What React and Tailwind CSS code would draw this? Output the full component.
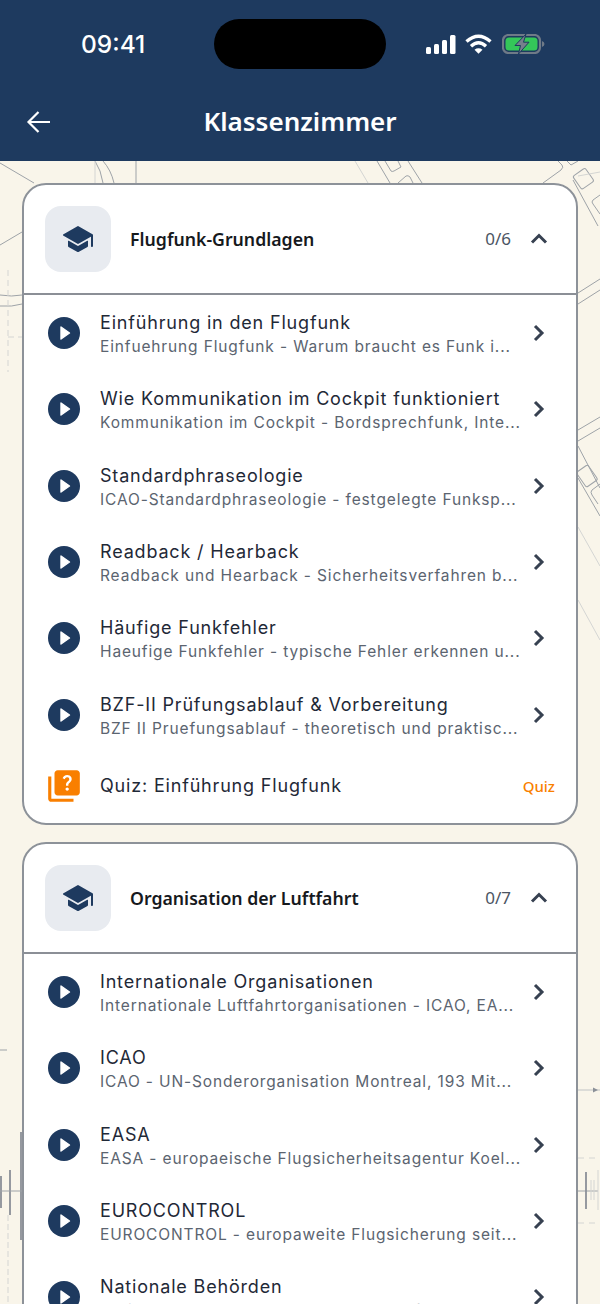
import React from "react";
import { IoSchool } from "react-icons/io5";
import { MdQuiz } from "react-icons/md";

const Play = () => (
  <svg width="32" height="32" viewBox="0 0 32 32" className="shrink-0">
    <circle cx="16" cy="16" r="16" fill="#1e3a5f" />
    <path d="M13 10 L21.5 16 L13 22 Z" fill="#fff" stroke="#fff" strokeWidth="1.4" strokeLinejoin="round" />
  </svg>
);

const ChevronRight = () => (
  <svg width="24" height="24" viewBox="0 0 24 24" className="shrink-0" fill="none" stroke="#374151" strokeWidth="3">
    <path d="M8 5 L15 12 L8 19" />
  </svg>
);

const ChevronUp = () => (
  <svg width="24" height="24" viewBox="0 0 24 24" className="shrink-0" fill="none" stroke="#374151" strokeWidth="3">
    <path d="M5 15.5 L12 8.5 L19 15.5" />
  </svg>
);

const Lesson = ({ title, sub }) => (
  <div className="flex h-[76.3px] items-center pl-[24px] pr-[25px]">
    <Play />
    <div className="ml-[20px] min-w-0 flex-1 pt-[1px]">
      <div className="truncate text-[18px] leading-[24px] tracking-[0.82px] text-[#1f2937]">{title}</div>
      <div className="mt-[2px] truncate text-[15.5px] leading-[19px] tracking-[0.86px] text-[#5b6470]">{sub}</div>
    </div>
    <div className="ml-[5px]"><ChevronRight /></div>
  </div>
);

const CardHeader = ({ title, count }) => (
  <div className="flex h-[110px] items-center border-b-2 border-[#8b8f96] pl-[21px] pr-[25px]">
    <div className="flex h-[66px] w-[66px] shrink-0 items-center justify-center rounded-[16px] bg-[#e8ebf0]">
      <IoSchool size={32} color="#1e3a5f" />
    </div>
    <div className="ml-[19px] flex-1 font-['Noto_Sans'] text-[17.7px] font-semibold text-[#16191d]">{title}</div>
    <div className="mr-[16px] font-['Noto_Sans'] text-[17px] text-[#4b5563]">{count}</div>
    <ChevronUp />
  </div>
);

const first = [
  ["Einführung in den Flugfunk", "Einfuehrung Flugfunk - Warum braucht es Funk i..."],
  ["Wie Kommunikation im Cockpit funktioniert", "Kommunikation im Cockpit - Bordsprechfunk, Inte..."],
  ["Standardphraseologie", "ICAO-Standardphraseologie - festgelegte Funksp..."],
  ["Readback / Hearback", "Readback und Hearback - Sicherheitsverfahren b..."],
  ["Häufige Funkfehler", "Haeufige Funkfehler - typische Fehler erkennen u..."],
  ["BZF-II Prüfungsablauf & Vorbereitung", "BZF II Pruefungsablauf - theoretisch und praktisc..."],
];
const second = [
  ["Internationale Organisationen", "Internationale Luftfahrtorganisationen - ICAO, EA..."],
  ["ICAO", "ICAO - UN-Sonderorganisation Montreal, 193 Mit..."],
  ["EASA", "EASA - europaeische Flugsicherheitsagentur Koel..."],
  ["EUROCONTROL", "EUROCONTROL - europaweite Flugsicherung seit..."],
  ["Nationale Behörden", "Nationale Behörden - BAF, DFS und Luftämter"],
];

const MapLines = () => (
  <svg className="absolute inset-0" width="600" height="1304" viewBox="0 0 600 1304" fill="none" stroke="#9ea3a8" strokeWidth="1">
    <path d="M0 163 L34 183 M0 245 L22 232 M95 161 Q101 170 103 183 M103 161 Q111 170 114 183 M136 161 V183" />
    <path d="M377 161 L390 183 M408 161 L422 183 M385 161 L391 171 Q392 172 394 171 L401 167 L398 161 M398 183 L406 176 Q408 175 410 177 L413 183" />
    <path d="M543 183 L561 170 Q564 167 562 165 L558 161 M567 161 L571 165 L578 161 M573 180 L598 226" />
    <rect x="576" y="171" width="15" height="16" rx="2" transform="rotate(-35 583 179)" />
    <path d="M600 195 L593 200 Q591 202 593 204 L600 214" />
    <path d="M355 161 L368 183 M95 161 V183 M578 176 L600 172" stroke="#d4d5d3" />
    <path d="M0 295 Q12 297 22 295 M0 306 Q12 307 22 304" />
    <path d="M8 270 V372 M8 337 H22" stroke="#d4d5d3" strokeDasharray="6 4" />
    <path d="M0 1050 H7" />
    <path d="M1 1176 V1208 M10 1170 V1215 M21 1132 V1240" stroke="#8b9098" strokeWidth="1.8" />
    <path d="M0 1191 H22" />
    <path d="M8 1215 V1304" stroke="#d4d5d3" strokeDasharray="6 3" />
    <path d="M578 293 L600 279 M578 304 L600 290 M578 430 L600 417 M578 441 L600 428" />
    <path d="M578 446 L600 488 M578 478 L600 516" />
    <rect x="580" y="467" width="14" height="18" rx="2" transform="rotate(-35 587 476)" />
    <path d="M600 484 L592 490 Q590 492 592 495 L598 504" />
    <path d="M578 527 L600 566 M578 600 L600 640" stroke="#d4d5d3" />
    <path d="M578 1090 H600" stroke="#c0c3c5" />
    <path d="M593 1087.5 L598 1090 L593 1092.5 Z" fill="#8b9098" stroke="none" />
    <path d="M578 1158 H600 M578 1223 H600" stroke="#d4d5d3" strokeDasharray="6 5" />
    <path d="M578 1191 H598" />
    <path d="M586 1172 V1209" stroke="#8b9098" strokeWidth="1.8" />
    <path d="M591 1180 V1200 M594 1180 V1200 M598 1170 V1210" stroke="#d4d5d3" />
  </svg>
);

const StatusIcons = () => (
  <div className="flex items-center">
    <svg width="32" height="20" viewBox="0 0 32 20" fill="#fff">
      <rect x="2" y="13" width="5" height="7" rx="1.5" />
      <rect x="10" y="10" width="5" height="10" rx="1.5" />
      <rect x="18" y="6" width="5" height="14" rx="1.5" />
      <rect x="26" y="1" width="5.5" height="19" rx="1.5" />
    </svg>
    <svg className="ml-[9px]" width="27" height="20" viewBox="0 0 27 20" fill="none" stroke="#fff" strokeWidth="3.4">
      <path d="M1.5 7.5 Q13.5 -3 25.5 7.5" />
      <path d="M6 12.2 Q13.5 5.5 21 12.2" />
      <path d="M13.5 19.8 L9.5 15.7 Q13.5 12.8 17.5 15.7 Z" fill="#fff" stroke="none" />
    </svg>
    <svg className="ml-[10px]" width="43" height="20" viewBox="0 0 43 20">
      <rect x="1" y="1" width="37" height="18" rx="5.5" fill="none" stroke="#6f7a87" strokeWidth="2.2" />
      <rect x="3.5" y="3.5" width="32" height="13" rx="3.5" fill="#34c759" />
      <path d="M40 7 Q42.5 8 42.5 10 Q42.5 12 40 13 Z" fill="#6f7a87" />
      <path d="M24 0 L13 11.5 H18.5 L16.5 20 L27 8.2 H21.5 Z" fill="#76808c" stroke="#1e3a5f" strokeWidth="1" />
    </svg>
  </div>
);

export default function App() {
  return (
    <div className="relative h-[1304px] w-[600px] overflow-hidden bg-[#f9f5ea] font-['Inter',sans-serif]">
      <MapLines />
      <header className="relative h-[161px] bg-[#1e3a5f] text-white">
        <div className="flex h-[88px] items-center pl-[81px] pr-[55px]">
          <div className="w-[133px] pt-[1px] text-[24.5px] font-medium leading-none">09:41</div>
          <div className="h-[50px] w-[172px] rounded-full bg-black" />
          <div className="ml-auto"><StatusIcons /></div>
        </div>
        <div className="relative flex h-[69px] items-center justify-center">
          <svg className="absolute left-[26px] top-[21px]" width="26" height="26" viewBox="0 0 26 26" fill="none" stroke="#fff" strokeWidth="2.2">
            <path d="M24 13 H3 M12.5 3 L2.5 13 L12.5 23" />
          </svg>
          <div className="pb-[3px] font-['Noto_Sans'] text-[26px] font-semibold leading-none">Klassenzimmer</div>
        </div>
      </header>

      <main className="relative flex flex-col gap-[17px] px-[22px] pt-[22px]">
        <section className="overflow-hidden rounded-[24px] border-2 border-[#8d9299] bg-white">
          <CardHeader title="Flugfunk-Grundlagen" count="0/6" />
          {first.map(([t, s]) => <Lesson key={t} title={t} sub={s} />)}
          <div className="flex h-[70px] items-center pb-[4px] pl-[24px] pr-[21px]">
            <MdQuiz size={38} color="#f97f00" className="-mx-[3px] shrink-0" />
            <div className="ml-[20px] flex-1 text-[18px] leading-[24px] tracking-[0.82px] text-[#1f2937]">Quiz: Einführung Flugfunk</div>
            <div className="font-['Noto_Sans'] text-[15px] font-medium leading-[18px] text-[#f97f00]">Quiz</div>
          </div>
        </section>
        <section className="overflow-hidden rounded-[24px] border-2 border-[#8d9299] bg-white">
          <CardHeader title="Organisation der Luftfahrt" count="0/7" />
          {second.map(([t, s]) => <Lesson key={t} title={t} sub={s} />)}
        </section>
      </main>
    </div>
  );
}
